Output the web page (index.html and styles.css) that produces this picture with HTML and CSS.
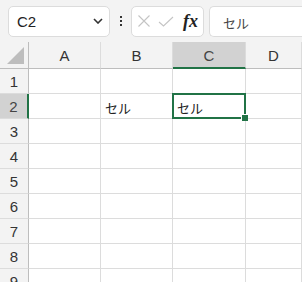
FILE: index.html
```html
<!DOCTYPE html>
<html lang="ja">

<head>
    <meta charset="UTF-8">
    <title>Sheet</title>
    <link rel="stylesheet" href="styles.css">
</head>

<body>
    <div class="toolbar">
        <div class="name-box">
            <span>C2</span>
            <svg class="chevron" width="10" height="6" viewBox="0 0 10 6">
                <path d="M1 1 L5 5 L9 1" fill="none" stroke="#333" stroke-width="1.6" />
            </svg>
        </div>
        <div class="dots"><i></i><i></i><i></i></div>
        <div class="fx-box">
            <svg width="12" height="12" viewBox="0 0 12 12">
                <path d="M0.5 0.5 L11.5 11.5 M11.5 0.5 L0.5 11.5" stroke="#c4c4c4" stroke-width="1.1" />
            </svg>
            <svg width="16" height="11" viewBox="0 0 16 11">
                <path d="M1 6 L5.5 10 L15 1" fill="none" stroke="#c4c4c4" stroke-width="1.1" />
            </svg>
            <span class="fx">fx</span>
        </div>
        <div class="formula">セル</div>
    </div>

    <div class="sheet">
        <div class="corner"><span class="tri"></span></div>
        <div class="col-head">A</div>
        <div class="col-head">B</div>
        <div class="col-head active">C</div>
        <div class="col-head">D</div>

        <div class="row-head">1</div>
        <div class="cell"></div><div class="cell"></div><div class="cell"></div><div class="cell"></div>

        <div class="row-head active">2</div>
        <div class="cell"></div><div class="cell">セル</div><div class="cell selected">セル</div><div class="cell"></div>

        <div class="row-head">3</div>
        <div class="cell"></div><div class="cell"></div><div class="cell"></div><div class="cell"></div>
        <div class="row-head">4</div>
        <div class="cell"></div><div class="cell"></div><div class="cell"></div><div class="cell"></div>
        <div class="row-head">5</div>
        <div class="cell"></div><div class="cell"></div><div class="cell"></div><div class="cell"></div>
        <div class="row-head">6</div>
        <div class="cell"></div><div class="cell"></div><div class="cell"></div><div class="cell"></div>
        <div class="row-head">7</div>
        <div class="cell"></div><div class="cell"></div><div class="cell"></div><div class="cell"></div>
        <div class="row-head">8</div>
        <div class="cell"></div><div class="cell"></div><div class="cell"></div><div class="cell"></div>
        <div class="row-head">9</div>
        <div class="cell"></div><div class="cell"></div><div class="cell"></div><div class="cell"></div>
    </div>
</body>

</html>
```

FILE: styles.css
```css
* {
    box-sizing: border-box;
}

html,
body {
    margin: 0;
    padding: 0;
    background-color: #fff;
    font-family: "Liberation Sans", "Noto Sans CJK JP", sans-serif;
    overflow: hidden;
}

.toolbar {
    display: flex;
    align-items: center;
    height: 42px;
    padding: 0 0 0 8px;
    background-color: #f3f3f3;
}

.name-box {
    display: flex;
    align-items: center;
    justify-content: space-between;
    width: 102px;
    height: 31px;
    padding: 0 6px 0 8px;
    background-color: #fff;
    border: 1px solid #dcdcdc;
    border-radius: 5px;
    font-size: 15px;
    color: #222;
}

.dots {
    display: flex;
    flex-direction: column;
    align-items: center;
    gap: 2px;
    width: 21px;
}

.dots i {
    width: 2px;
    height: 2px;
    background-color: #333;
}

.fx-box {
    display: flex;
    align-items: center;
    gap: 8px;
    width: 73px;
    height: 31px;
    padding: 0 0 0 6px;
    background-color: #fff;
    border: 1px solid #dcdcdc;
    border-radius: 5px;
}

.fx {
    font-family: "Liberation Serif", serif;
    font-style: italic;
    font-weight: bold;
    font-size: 18px;
    color: #222;
    margin-left: 1px;
}

.formula {
    flex: 1;
    height: 31px;
    margin-left: 5px;
    padding: 6px 0 0 13px;
    background-color: #fff;
    border: 1px solid #dcdcdc;
    border-right: none;
    border-radius: 5px 0 0 5px;
    font-size: 13px;
    color: #444;
}

.sheet {
    display: grid;
    grid-template-columns: 29px 72px 72px 73px 1fr;
    grid-template-rows: 27px;
    grid-auto-rows: 25px;
    background-color: #fff;
}

.corner,
.col-head,
.row-head {
    background-color: #f3f3f3;
    border-right: 1px solid #d0d0d0;
    border-bottom: 1px solid #d0d0d0;
    color: #333;
    font-size: 15px;
    display: flex;
    align-items: center;
    justify-content: center;
}

.corner {
    position: relative;
    border-right: 1px solid #bdbdbd;
    border-bottom: 1px solid #bdbdbd;
}

.tri {
    position: absolute;
    right: 4px;
    bottom: 4px;
    width: 0;
    height: 0;
    border-left: 17px solid transparent;
    border-bottom: 17px solid #bdbdbd;
}

.col-head {
    border-right: 1px solid #dcdcdc;
    border-bottom: 1px solid #bdbdbd;
    padding-top: 1px;
}

.col-head.active {
    background-color: #d2d2d2;
    border-bottom: 2px solid #217346;
    color: #444;
}

.row-head {
    border-right: 1px solid #bdbdbd;
    border-bottom: 1px solid #dcdcdc;
    font-size: 15px;
}

.row-head.active {
    background-color: #d2d2d2;
    border-right: 2px solid #217346;
    color: #444;
}

.cell {
    border-right: 1px solid #dcdcdc;
    border-bottom: 1px solid #dcdcdc;
    font-size: 13px;
    color: #222;
    padding: 4px 0 0 4px;
}

.selected {
    position: relative;
}

.selected::after {
    content: "";
    position: absolute;
    left: -1px;
    top: -1px;
    right: -1px;
    bottom: -1px;
    border: 2px solid #217346;
}

.selected::before {
    content: "";
    position: absolute;
    right: -3px;
    bottom: -3px;
    width: 6px;
    height: 6px;
    background-color: #217346;
    border-left: 1px solid #fff;
    border-top: 1px solid #fff;
    z-index: 1;
}
```
